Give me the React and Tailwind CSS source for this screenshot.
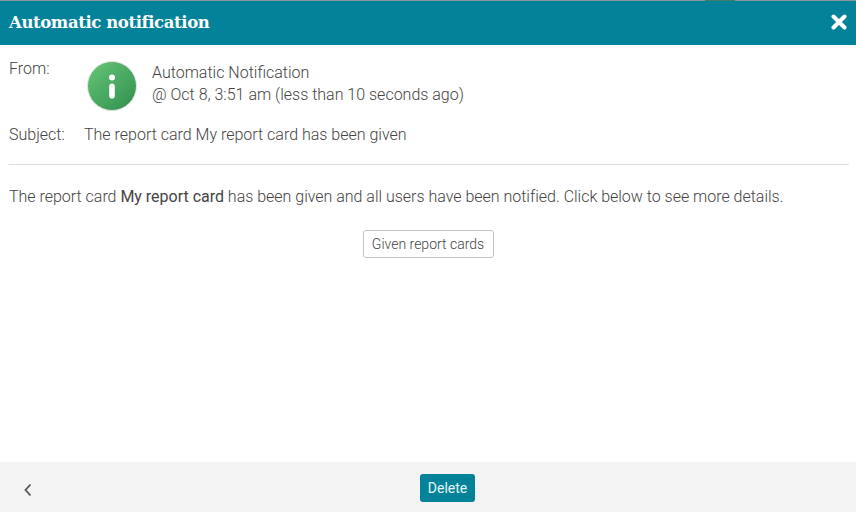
import React from "react";

function InfoIcon() {
  return (
    <svg width="50" height="50" viewBox="0 0 50 50" className="block">
      <defs>
        <linearGradient id="g" x1="0.15" y1="0.1" x2="0.85" y2="0.9">
          <stop offset="0" stopColor="#5fbf72" />
          <stop offset="1" stopColor="#379552" />
        </linearGradient>
      </defs>
      <circle cx="25" cy="25" r="24.5" fill="url(#g)" stroke="#e4e4e4" strokeWidth="1" />
      <circle cx="25" cy="16.5" r="3" fill="#fff" />
      <rect x="22.2" y="22.5" width="5.6" height="15" rx="2.8" fill="#fff" />
    </svg>
  );
}

export default function App() {
  return (
    <div className="w-[856px] h-[512px] flex flex-col bg-white overflow-hidden font-['Roboto',sans-serif] text-[#444] font-light">
      <div className="h-px bg-[#8a969c] shrink-0 flex justify-end pr-[121px]">
        <div className="w-[30px] h-px bg-[#3f7f6a]" />
      </div>
      <header className="h-[44px] shrink-0 bg-[#038299] flex items-center justify-between pl-[9px] pr-[9px]">
        <h1 className="text-[16.5px] font-bold text-white font-['DejaVu_Serif',serif] tracking-[-0.4px]">Automatic notification</h1>
        <svg width="16" height="16" viewBox="0 0 16 16" className="block mt-[-2px]">
          <path d="M2.5 2.5 L13.5 13.5 M13.5 2.5 L2.5 13.5" stroke="#fff" strokeWidth="4" strokeLinecap="round" />
        </svg>
      </header>
      <main className="flex-1 flex flex-col px-[9px]">
        <div className="flex mt-[16px] h-[50px]">
          <div className="w-[78px] text-[16px] leading-[16px]">From:</div>
          <InfoIcon />
          <div className="ml-[15px] pt-[1px] text-[16px] leading-[22px]">
            <div>Automatic Notification</div>
            <div>@ Oct 8, 3:51 am (less than 10 seconds ago)</div>
          </div>
        </div>
        <div className="flex mt-[14px] text-[16px] leading-[20px]">
          <div className="w-[75px]">Subject:</div>
          <div>The report card My report card has been given</div>
        </div>
        <div className="h-px bg-[#ddd] mt-[19px] mr-[-2px]" />
        <p className="mt-[21px] text-[16px] leading-[22px] tracking-[-0.012px]">
          The report card <span className="font-normal">My report card</span> has been given and all users have been notified. Click below to see more details.
        </p>
        <div className="flex justify-center mt-[22px]">
          <button className="h-[28px] w-[131px] border border-[#c4c4c4] rounded-[3px] text-[14px] text-[#444] font-light bg-white">Given report cards</button>
        </div>
      </main>
      <footer className="h-[50px] shrink-0 bg-[#f4f4f4] flex items-center relative pl-[420px]">
        <svg width="10" height="14" viewBox="0 0 10 14" className="absolute left-[23px] top-[21px]">
          <path d="M7.5 1.5 L2.5 7 L7.5 12.5" fill="none" stroke="#555" strokeWidth="1.8" />
        </svg>
        <button className="h-[28px] w-[55px] mt-[2px] bg-[#038299] text-[#e6f6f8] rounded-[3px] text-[14px] font-normal">Delete</button>
      </footer>
    </div>
  );
}
